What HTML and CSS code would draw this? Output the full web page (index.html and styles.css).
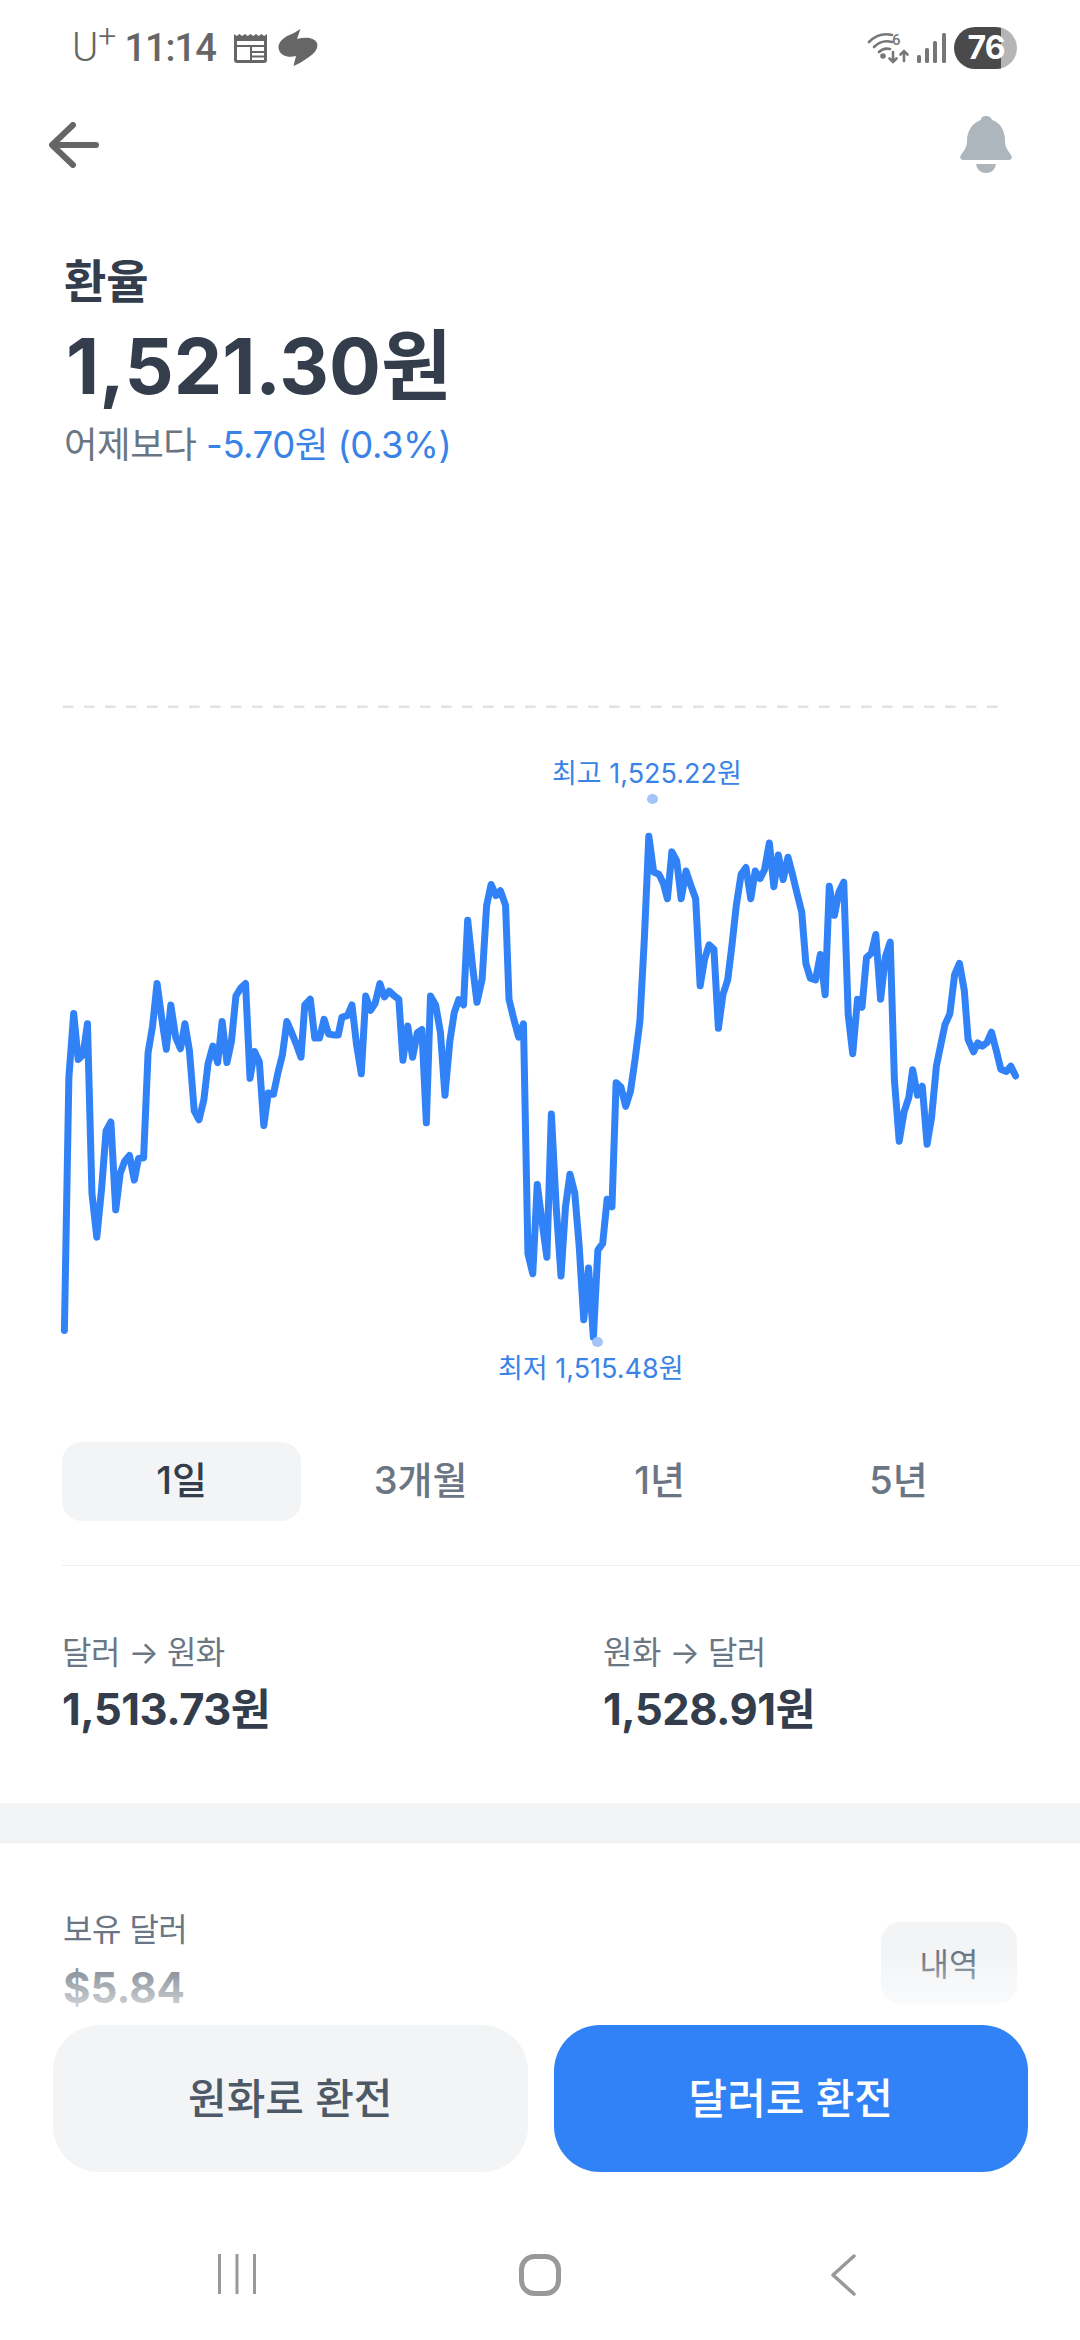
FILE: index.html
```html
<!DOCTYPE html>
<html lang="ko">
<head>
    <meta charset="UTF-8">
    <meta name="viewport" content="width=device-width, initial-scale=1.0">
    <title>환율</title>
    <link rel="stylesheet" href="styles.css">
</head>
<body>
<div class="phone">
    <!-- Status bar -->
    <div class="status">
        <div class="status-left">
            <span class="carrier">U<sup>+</sup></span>
            <span class="clock">11:14</span>
            <svg class="ico-news" width="33" height="30" viewBox="0 0 33 30">
                <path d="M0 1 L2.7 3 L5.5 1 L8.2 3 L11 1 L13.7 3 L16.5 1 L19.2 3 L22 1 L24.7 3 L27.5 1 L30.2 3 L33 1 V27 Q33 30 30 30 H3 Q0 30 0 27 Z" fill="#666"/>
                <rect x="3" y="8" width="27" height="19" fill="#fff"/>
                <rect x="3" y="12" width="27" height="2" fill="#666"/>
                <rect x="16" y="14" width="2" height="13" fill="#666"/>
                <rect x="18" y="18" width="12" height="2" fill="#666"/>
                <rect x="18" y="22.5" width="12" height="2" fill="#666"/>
            </svg>
            <svg class="ico-swirl" width="40" height="38" viewBox="0 0 40 38">
                <path d="M22.4 0 L19 10 C27 8 36 8 39 14 C41 21 34 26 28 30 C24 33 20 35 15.5 37 L18 27 C10 29 3 27 1 21 C-1 15 3 11 9 7 C14 5 18 3 22.4 0 Z" fill="#666"/>
            </svg>
        </div>
        <div class="status-right">
            <svg width="42" height="32" viewBox="0 0 42 32" fill="none" stroke="#777" stroke-width="2.6" stroke-linecap="round">
                <path d="M2 10 C9 3 17 1 25 3"/>
                <path d="M7 15 C12 10 18 8 25 10"/>
                <path d="M12 20 C15 17 19 16 23 17"/>
                <circle cx="16" cy="24" r="1.5" fill="#777"/>
                <path d="M26 20 V30 M22.5 26.5 L26 30 L29.5 26.5"/>
                <path d="M37 29 V19 M33.5 22.5 L37 19 L40.5 22.5"/>
                <text x="25" y="13" class="wifi-six">6</text>
            </svg>
            <svg width="29" height="30" viewBox="0 0 29 30" fill="#777">
                <rect x="0" y="22" width="4" height="8" rx="1.5"/>
                <rect x="8" y="15" width="4" height="15" rx="1.5"/>
                <rect x="16" y="8" width="4" height="22" rx="1.5"/>
                <rect x="25" y="0" width="4" height="30" rx="1.5"/>
            </svg>
            <div class="battery"><span class="battery-num">76</span></div>
        </div>
    </div>

    <!-- Top bar -->
    <div class="topbar">
        <svg width="50" height="46" viewBox="0 0 50 46" fill="none" stroke="#666" stroke-width="6" stroke-linecap="round" stroke-linejoin="round">
            <path d="M47 23 H4 M24 3 L3 23 L24 43"/>
        </svg>
        <svg width="52" height="58" viewBox="0 0 52 58" fill="#adb5bd">
            <path d="M26 0 C29 0 31 1 32 4 C41 7 45 15 45 25 C45 32 49 36 51 39 C53 42 51 44 49 44 H3 C1 44 -1 42 1 39 C3 36 7 32 7 25 C7 15 12 7 21 4 C21 1 23 0 26 0 Z"/>
            <path d="M16 48 H36 C35 54 31 57 26 57 C21 57 17 54 16 48 Z"/>
        </svg>
    </div>

    <!-- Summary -->
    <div class="summary">
        <div class="summary-title">환율</div>
        <div class="summary-value">1,521.30원</div>
        <div class="summary-diff">어제보다 <span class="diff-blue">-5.70원 (0.3%)</span></div>
    </div>

    <!-- Chart -->
    <div class="chart">
        <svg class="chart-svg" width="1080" height="700" viewBox="0 0 3136 1568" preserveAspectRatio="none">
            <line class="chart-dash" x1="183" y1="60" x2="2900" y2="60"/>
            <polyline class="chart-line" points="187,1457 200,890 214,747 227,850 241,840 254,770 267,1150 281,1248 295,1140 308,1010 322,990 336,1187 349,1105 362,1078 376,1065 390,1120 402,1072 417,1070 430,835 443,775 456,680 470,760 483,827 496,728 510,800 524,826 537,770 550,830 564,965 578,985 592,940 604,860 618,820 632,857 645,765 659,857 672,810 685,708 699,690 713,680 726,892 739,832 753,855 766,998 779,925 794,928 807,880 820,840 833,765 847,790 860,815 874,845 885,728 901,715 914,802 928,802 941,760 954,793 968,795 982,795 993,755 1009,752 1022,728 1035,815 1049,882 1062,708 1076,740 1089,725 1103,680 1116,710 1130,697 1144,707 1158,715 1170,852 1184,775 1198,845 1212,790 1225,783 1238,992 1250,708 1265,728 1279,790 1292,930 1306,810 1319,745 1332,716 1346,728 1358,538 1372,640 1385,722 1400,670 1413,505 1426,458 1440,483 1453,472 1468,505 1478,715 1492,760 1506,800 1520,770 1533,1285 1547,1330 1560,1130 1575,1220 1588,1293 1601,972 1615,1180 1629,1335 1642,1180 1655,1107 1669,1150 1682,1270 1695,1433 1709,1317 1723,1472 1736,1277 1750,1262 1763,1163 1777,1180 1789,902 1803,912 1817,955 1831,920 1844,850 1858,765 1871,580 1884,350 1898,430 1913,435 1926,455 1938,490 1951,385 1965,405 1978,490 1992,428 2006,460 2020,490 2033,685 2046,625 2059,593 2073,603 2086,780 2099,705 2113,672 2126,590 2138,505 2152,435 2166,420 2180,490 2193,428 2207,445 2220,425 2234,365 2247,463 2260,392 2274,447 2288,397 2301,435 2315,480 2328,520 2340,635 2353,668 2368,672 2382,615 2396,705 2408,462 2423,527 2436,475 2450,453 2463,750 2476,837 2490,715 2503,733 2516,622 2530,612 2543,570 2557,715 2571,620 2585,587 2597,895 2611,1033 2625,968 2639,935 2650,873 2664,930 2678,910 2692,1040 2705,980 2719,865 2731,820 2744,772 2758,748 2772,660 2786,635 2800,695 2811,805 2827,833 2839,813 2852,820 2866,812 2879,789 2893,830 2906,872 2922,877 2935,865 2949,887"/>
        </svg>
        <span class="chart-label label-high">최고 1,525.22원</span>
        <span class="chart-dot dot-high"></span>
        <span class="chart-dot dot-low"></span>
        <span class="chart-label label-low">최저 1,515.48원</span>
    </div>

    <!-- Period tabs -->
    <div class="tabs">
        <div class="tab tab-active">1일</div>
        <div class="tab">3개월</div>
        <div class="tab">1년</div>
        <div class="tab">5년</div>
    </div>

    <!-- Buy / sell rates -->
    <div class="rates">
        <div class="rate-col">
            <div class="rate-label">달러 → 원화</div>
            <div class="rate-value">1,513.73원</div>
        </div>
        <div class="rate-col">
            <div class="rate-label">원화 → 달러</div>
            <div class="rate-value">1,528.91원</div>
        </div>
    </div>

    <div class="band"></div>

    <!-- Holdings -->
    <div class="holding">
        <div>
            <div class="holding-label">보유 달러</div>
            <div class="holding-value">$5.84</div>
        </div>
        <div class="history-btn">내역</div>
    </div>

    <!-- Fixed bottom area -->
    <div class="bottom">
        <div class="fade"></div>
        <div class="actions">
            <div class="action action-gray">원화로 환전</div>
            <div class="action action-blue">달러로 환전</div>
        </div>
        <div class="nav">
            <div class="nav-cell">
                <svg width="38" height="40" viewBox="0 0 38 40" stroke="#999" stroke-width="3"><path d="M1.5 0 V40 M19 0 V40 M36.5 0 V40"/></svg>
            </div>
            <div class="nav-cell">
                <svg width="42" height="42" viewBox="0 0 42 42" fill="none" stroke="#999" stroke-width="5"><rect x="2.5" y="2.5" width="37" height="37" rx="13"/></svg>
            </div>
            <div class="nav-cell">
                <svg width="26" height="42" viewBox="0 0 26 42" fill="none" stroke="#999" stroke-width="3.5" stroke-linecap="round" stroke-linejoin="round"><path d="M24 2 L3 21 L24 40"/></svg>
            </div>
        </div>
    </div>
</div>
</body>
</html>
```

FILE: styles.css
```css
* {
    box-sizing: border-box;
}
body {
    margin: 0;
    background: #fff;
    font-family: Inter, "Noto Sans CJK KR", sans-serif;
    color: #333d4b;
}
.phone {
    position: relative;
    width: 1080px;
    height: 2340px;
    overflow: hidden;
    background: #fff;
}

/* status bar */
.status {
    height: 96px;
    display: flex;
    align-items: center;
    justify-content: space-between;
    padding: 0 63px 0 72px;
}
.status-left,
.status-right {
    display: flex;
    align-items: center;
}
.status-right {
    gap: 8px;
}
.carrier {
    font-family: Roboto, sans-serif;
    font-size: 40px;
    font-weight: 300;
    color: #666;
    line-height: 1;
}
.carrier sup {
    font-size: 32px;
    line-height: 0;
    vertical-align: 14px;
}
.clock {
    margin-left: 8px;
    font-family: Roboto, sans-serif;
    font-size: 38px;
    font-weight: 500;
    color: #666;
    letter-spacing: -1px;
}
.ico-news {
    margin-left: 18px;
}
.ico-swirl {
    margin-left: 11px;
}
.wifi-six {
    font-family: Roboto, sans-serif;
    font-size: 15px;
    font-weight: 500;
    fill: #777;
    stroke: none;
}
.battery {
    width: 63px;
    height: 42px;
    border-radius: 21px;
    background: linear-gradient(90deg, #4a4a4a 0, #4a4a4a 47px, #b5b5b5 47px);
    text-align: center;
    padding-left: 1px;
}
.battery-num {
    font-family: Inter, sans-serif;
    font-size: 32px;
    font-weight: 700;
    line-height: 42px;
    letter-spacing: -1px;
    color: #fff;
}

/* top bar */
.topbar {
    height: 98px;
    display: flex;
    align-items: center;
    justify-content: space-between;
    padding: 0 68px 0 49px;
}

/* summary */
.summary {
    height: 486px;
    padding: 57px 64px 0;
}
.summary-title {
    font-size: 46px;
    font-weight: 700;
    line-height: 60px;
}
.summary-value {
    margin-top: 5px;
    margin-left: 2px;
    font-size: 77px;
    font-weight: 700;
    line-height: 100px;
}
.summary-diff {
    margin-top: 4px;
    font-size: 36.5px;
    line-height: 50px;
    color: #6b7684;
    letter-spacing: -0.5px;
}
.diff-blue {
    color: #3a83e6;
}

/* chart */
.chart {
    position: relative;
    height: 700px;
}
.chart-svg {
    display: block;
}
.chart-dash {
    stroke: #e2e2e2;
    stroke-width: 2.5;
    stroke-dasharray: 10.5 10.5;
    vector-effect: non-scaling-stroke;
}
.chart-line {
    fill: none;
    stroke: #3182f6;
    stroke-width: 7;
    stroke-linejoin: round;
    stroke-linecap: round;
    vector-effect: non-scaling-stroke;
}
.chart-label {
    position: absolute;
    font-size: 27px;
    line-height: 36px;
    color: #3a83e6;
    white-space: nowrap;
}
.label-high {
    left: 552px;
    top: 76px;
}
.label-low {
    left: 498px;
    top: 671px;
}
.chart-dot {
    position: absolute;
    width: 11px;
    height: 10px;
    border-radius: 50%;
    background: #a3c3f9;
}
.dot-high {
    left: 647px;
    top: 114px;
}
.dot-low {
    left: 592px;
    top: 657px;
}

/* tabs */
.tabs {
    display: grid;
    grid-template-columns: repeat(4, 239px);
    height: 79px;
    margin: 62px 0 44px 62px;
}
.tab {
    display: flex;
    align-items: center;
    justify-content: center;
    padding-bottom: 8px;
    font-size: 38px;
    font-weight: 500;
    color: #6b7684;
    border-radius: 20px;
}
.tab-active {
    background: #f2f4f6;
    color: #333d4b;
}

/* rates */
.rates {
    display: flex;
    margin-left: 62px;
    padding: 65px 0 68px;
    border-top: 1px solid #eceef0;
}
.rate-col {
    flex: none;
    width: 541px;
}
.rate-label {
    font-size: 32px;
    line-height: 44px;
    color: #6b7684;
    letter-spacing: -0.5px;
}
.rate-value {
    margin-top: 8px;
    font-size: 43.5px;
    font-weight: 700;
    line-height: 52px;
    letter-spacing: -0.5px;
}
.band {
    height: 40px;
    background: #f2f4f6;
    border-bottom: 1px solid #eceef0;
}

/* holdings */
.holding {
    display: flex;
    align-items: center;
    justify-content: space-between;
    padding: 65px 63px 0 63px;
}
.holding-label {
    font-size: 32px;
    line-height: 44px;
    color: #6b7684;
    letter-spacing: -0.5px;
}
.holding-value {
    margin-top: 11px;
    font-size: 42px;
    font-weight: 700;
    line-height: 50px;
    color: #6f7884;
}
.history-btn {
    width: 136px;
    height: 82px;
    margin-top: 5px;
    padding-bottom: 3px;
    border-radius: 20px;
    background: #f2f4f6;
    display: flex;
    align-items: center;
    justify-content: center;
    font-size: 32px;
    color: #6b7684;
}

/* bottom */
.bottom {
    position: absolute;
    left: 0;
    right: 0;
    bottom: 0;
}
.fade {
    height: 70px;
    background: linear-gradient(rgba(255,255,255,0), rgba(255,255,255,0.9));
}
.actions {
    display: flex;
    gap: 26px;
    padding: 0 52px 0 53px;
    background: #fff;
}
.action {
    flex: 1;
    height: 147px;
    padding-bottom: 6px;
    border-radius: 46px;
    display: flex;
    align-items: center;
    justify-content: center;
    font-size: 42px;
    font-weight: 500;
}
.action-gray {
    background: #f2f4f6;
    color: #4e5968;
}
.action-blue {
    background: #3182f6;
    color: #fff;
}
.nav {
    height: 168px;
    padding-top: 82px;
    display: flex;
    justify-content: center;
    align-items: flex-start;
    background: #fff;
}
.nav-cell {
    width: 303px;
    display: flex;
    justify-content: center;
}
```
